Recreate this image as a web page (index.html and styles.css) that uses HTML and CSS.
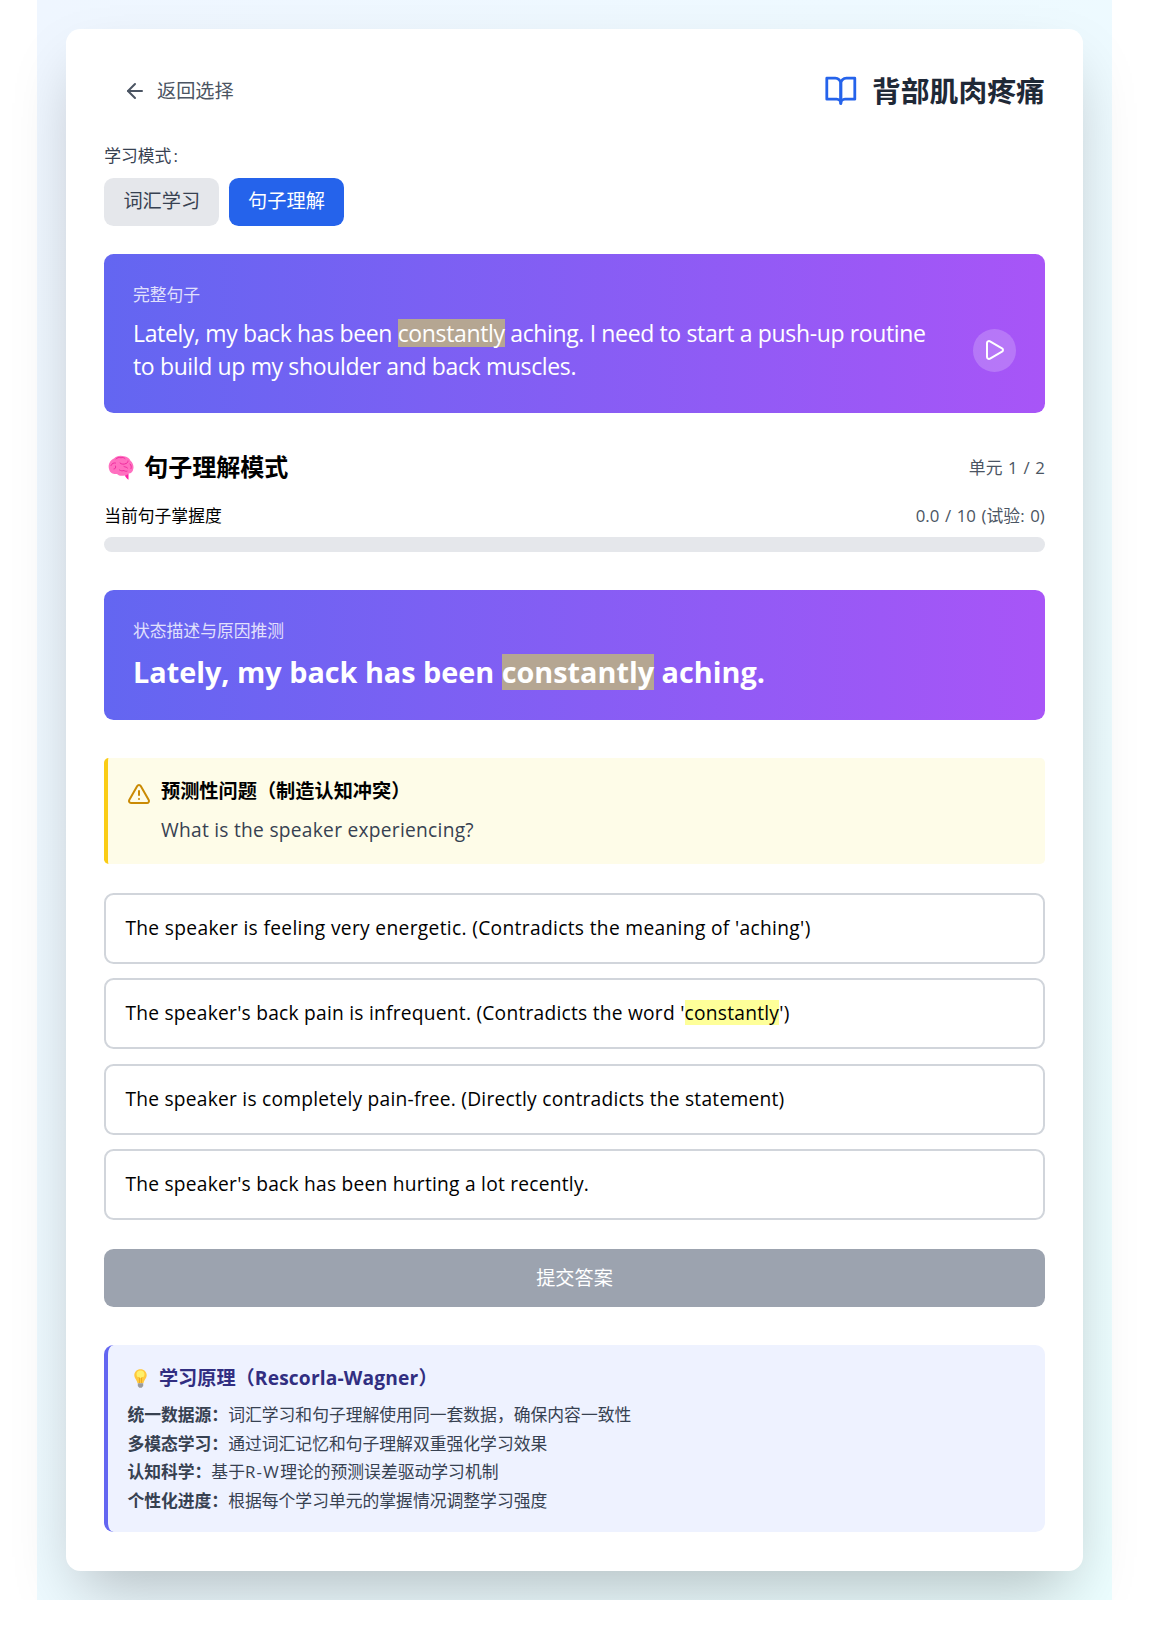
FILE: index.html
```html
<!DOCTYPE html>
<html lang="zh-CN">
<head>
<meta charset="utf-8">
<title>背部肌肉疼痛</title>
<link rel="stylesheet" href="styles.css">
</head>
<body>
<div class="page">
  <main class="card">
    <header class="top">
      <button class="back">
        <svg class="icon" viewBox="0 0 24 24"><path d="m12 19-7-7 7-7"/><path d="M19 12H5"/></svg>
        返回选择
      </button>
      <h1 class="title">
        <svg class="icon book" viewBox="0 0 24 24"><path d="M2 3h6a4 4 0 0 1 4 4v14a3 3 0 0 0-3-3H2z"/><path d="M22 3h-6a4 4 0 0 0-4 4v14a3 3 0 0 1 3-3h7z"/></svg>
        背部肌肉疼痛
      </h1>
    </header>

    <section class="modes">
      <div class="label">学习模式<span class="colon">:</span></div>
      <div class="tabs">
        <button class="tab">词汇学习</button>
        <button class="tab active">句子理解</button>
      </div>
    </section>

    <section class="banner">
      <div class="caption">完整句子</div>
      <div class="sentence-row">
        <p class="sentence">Lately, my back has been <mark class="hl">constantly</mark> aching. I need to start a push-up routine<br>to build up my shoulder and back muscles.</p>
        <button class="play"><svg class="icon" viewBox="0 0 24 24"><path d="M5 5a2 2 0 0 1 3.008-1.728l11.997 6.998a2 2 0 0 1 .003 3.458l-12 7A2 2 0 0 1 5 19z"/></svg></button>
      </div>
    </section>

    <section class="progress">
      <div class="row heading-row">
        <h2 class="heading">
          <svg class="brain" viewBox="0 0 26 25">
            <path fill="#ff70c0" d="M1 14C-.3 9 2.500 5 6 3.500 8.500.500 13 .200 16 1.300c3 .300 5.500 2 6.500 4.500 2.500 2 3.500 5.500 2.800 8-.200 3-2.300 4.700-4.600 4.700-.700 1.500-2.200 2-3.700 1.800-2.500.900-6 .900-8-1.300C6 19.500 2 18.500 1 14z"/>
            <path fill="#ff1fa5" d="M16.500 20.200c1.500.2 3-.3 4-1.700v6.300c-1.500-1-2.500-2.500-4-4.600z"/>
            <path fill="none" stroke="#f02c9f" stroke-linecap="round" stroke-width="1" d="M8 4c1-1.500 3-1.800 5-1.200 1.500-.5 3-.3 4 .7M3 10.500c1-2 2.500-3 4.500-2.500M6 14c1.500 0 2-1.500 1.500-3M12 8c1.500 1.500 4 1.500 6 .5 1.500-.5 2-1.500 2-2.500M11.500 15c1.500 1 3 1 4.500.5 1 .8 2 1 3 .7M22 9c1.500 1.500 1.500 3 1 4.500M16 11.500c1 .5 2.500.5 3.500 1.500"/>
          </svg>
          <span>句子理解模式</span>
        </h2>
        <span class="meta">单元 1 / 2</span>
      </div>
      <div class="row">
        <span class="meta dark">当前句子掌握度</span>
        <span class="meta">0.0 / 10 (试验: 0)</span>
      </div>
      <div class="bar"></div>
    </section>

    <section class="banner">
      <div class="caption">状态描述与原因推测</div>
      <p class="big">Lately, my back has been <mark class="hl">constantly</mark> aching.</p>
    </section>

    <section class="question">
      <svg class="icon warn" viewBox="0 0 24 24"><path d="m21.730 18-8-14a2 2 0 0 0-3.480 0l-8 14A2 2 0 0 0 4 21h16a2 2 0 0 0 1.730-3"/><path d="M12 9v4"/><path d="M12 17h.01"/></svg>
      <div>
        <h3 class="q-title">预测性问题（制造认知冲突）</h3>
        <p class="q-text">What is the speaker experiencing?</p>
      </div>
    </section>

    <section class="options">
      <button class="option wide">The speaker is feeling very energetic. (Contradicts the meaning of 'aching')</button>
      <button class="option">The speaker's back pain is infrequent. (Contradicts the word '<mark class="yellow">constantly</mark>')</button>
      <button class="option">The speaker is completely pain-free. (Directly contradicts the statement)</button>
      <button class="option">The speaker's back has been hurting a lot recently.</button>
    </section>

    <button class="submit">提交答案</button>

    <section class="info">
      <h3 class="info-title">
        <svg class="bulb" viewBox="0 0 13 19">
          <path fill="#ffc83d" d="M6.500.300C2.800.300.300 3 .300 6.300c0 3.200 2.600 4.400 3.200 8h6c.6-3.600 3.200-4.800 3.200-8C12.700 3 10.200.300 6.500.300z"/>
          <path fill="#fff06a" d="M6.500 1.500c2.500 0 4 1.700 4 3.800S9 9 6.500 9s-4-1.600-4-3.700 1.500-3.800 4-3.800z"/>
          <path fill="none" stroke="#e8a317" stroke-width=".8" d="M4.500 8l1 1v5M8.500 8l-1 1v5"/>
          <path fill="#9b9b9b" d="M3.800 14.300h5.400v2.600l-1.500 1.800H5.300l-1.500-1.800z"/>
        </svg>
        学习原理（<span class="rw">Rescorla-Wagner</span>）
      </h3>
      <ul class="facts">
        <li><strong>统一数据源：</strong>词汇学习和句子理解使用同一套数据，确保内容一致性</li>
        <li><strong>多模态学习：</strong>通过词汇记忆和句子理解双重强化学习效果</li>
        <li><strong>认知科学：</strong>基于<span class="rw-short">R-W</span>理论的预测误差驱动学习机制</li>
        <li><strong>个性化进度：</strong>根据每个学习单元的掌握情况调整学习强度</li>
      </ul>
    </section>
  </main>
</div>
</body>
</html>
```
FILE: styles.css
```css
html { font-size: 19.2px; }
*, *::before, *::after { box-sizing: border-box; }
body {
  margin: 0;
  background: #fff;
  color: #000;
  font-family: "Open Sans", "Noto Sans CJK SC", sans-serif;
  line-height: 1.5;
}
h1, h2, h3, p, ul { margin: 0; padding: 0; }
ul { list-style: none; }
button { font: inherit; border: 0; padding: 0; background: none; color: inherit; }
mark { color: inherit; background: none; }

.icon {
  display: block;
  flex: none;
  width: 24px;
  height: 24px;
  fill: none;
  stroke: currentColor;
  stroke-width: 2;
  stroke-linecap: round;
  stroke-linejoin: round;
}

.page {
  width: 1075px;
  min-height: 1600px;
  margin-left: 37px;
  padding: 1.5rem;
  background: linear-gradient(to bottom right, #eff6ff, #ecfeff);
  clip-path: inset(0 -80px);
}
.card {
  padding: 2rem;
  background: #fff;
  border-radius: 14.4px;
  box-shadow: 0 30px 60px -14.4px rgba(0, 0, 0, 0.25);
}

.top { display: flex; justify-content: space-between; align-items: center; margin-bottom: 1.5rem; }
.back { display: flex; align-items: center; gap: 0.5rem; padding: 0.5rem 1rem; color: #4b5563; line-height: 28.8px; }
.title { display: flex; align-items: center; gap: 0.75rem; font-size: 1.5rem; line-height: 2rem; font-weight: 700; color: #1f2937; }
.book { width: 33.6px; height: 33.6px; color: #2563eb; }

.modes { margin-bottom: 1.5rem; }
.label { margin-bottom: 0.5rem; font-size: 0.875rem; line-height: 24px; color: #374151; }
.colon { margin-left: 2px; }
.tabs { display: flex; gap: 0.5rem; }
.tab { padding: 0.5rem 1rem; line-height: 28.8px; border-radius: 0.5rem; background: #e5e7eb; color: #374151; }
.tab.active { background: #2563eb; color: #fff; }

.banner {
  margin-bottom: 2rem;
  padding: 1.5rem;
  border-radius: 0.5rem;
  background: linear-gradient(to right, #6366f1, #a855f7);
  color: #fff;
}
.caption { margin-bottom: 0.5rem; font-size: 0.875rem; line-height: 24px; opacity: 0.8; }
.sentence-row { display: flex; justify-content: space-between; align-items: center; }
.sentence { font-size: 23px; font-weight: 500; line-height: 33.6px; letter-spacing: -0.36px; white-space: nowrap; }
.hl { display: inline-block; line-height: 28px; background: #b5a692; }
.play { flex: none; padding: 0.5rem; border-radius: 50%; background: rgba(255, 255, 255, 0.2); }

.row { display: flex; justify-content: space-between; align-items: center; margin-bottom: 0.5rem; }
.heading-row { margin-bottom: 1rem; }
.heading { display: flex; align-items: center; gap: 10.500px; padding-left: 3.500px; font-size: 1.25rem; line-height: 33.6px; font-weight: 700; }
.heading span { margin-top: -1px; margin-bottom: 1px; }
.brain { width: 26px; height: 25px; }
.meta { font-size: 0.875rem; line-height: 24px; color: #4b5563; word-spacing: 1.3px; }
.meta.dark { color: #000; }
.bar { height: 14.4px; margin-bottom: 2rem; border-radius: 8px; background: #e5e7eb; }

.big { font-size: 1.5rem; line-height: 38.4px; font-weight: 700; white-space: nowrap; }
.big .hl { line-height: 36px; }

.question {
  display: flex;
  gap: 0.5rem;
  margin-bottom: 1.5rem;
  padding: 1rem;
  border-left: 4px solid #facc15;
  border-radius: 0.25rem;
  background: #fefce8;
}
.warn { margin-top: 0.25rem; color: #ca8a04; }
.q-title { font-size: 1rem; line-height: 28.8px; font-weight: 700; }
.q-text { margin-top: 0.5rem; line-height: 28.8px; letter-spacing: 0.26px; color: #374151; }

.options { display: grid; gap: 0.75rem; margin-bottom: 1.5rem; }
.option { padding: 1rem; border: 2px solid #d1d5db; border-radius: 0.5rem; text-align: left; line-height: 28.8px; letter-spacing: 0.24px; }
.option.wide { letter-spacing: 0.33px; }
.yellow { display: inline-block; line-height: 25px; background: #feff99; }

.submit { display: block; width: 100%; margin-bottom: 2rem; padding: 0.75rem; border-radius: 0.5rem; background: #9ca3af; color: #fff; line-height: 28.8px; }

.info { padding: 1rem; border-left: 4px solid #6366f1; border-radius: 0.5rem; background: #eef2ff; }
.info-title { display: flex; align-items: center; margin-bottom: 0.5rem; font-size: 1rem; line-height: 28.8px; font-weight: 700; color: #312e81; }
.bulb { width: 13px; height: 19px; margin: 0 12px 0 6.500px; }
.rw { letter-spacing: 0.16px; }
.rw-short { letter-spacing: 1.3px; }
.facts { display: grid; gap: 0.25rem; font-size: 0.875rem; line-height: 24px; color: #374151; }
```
